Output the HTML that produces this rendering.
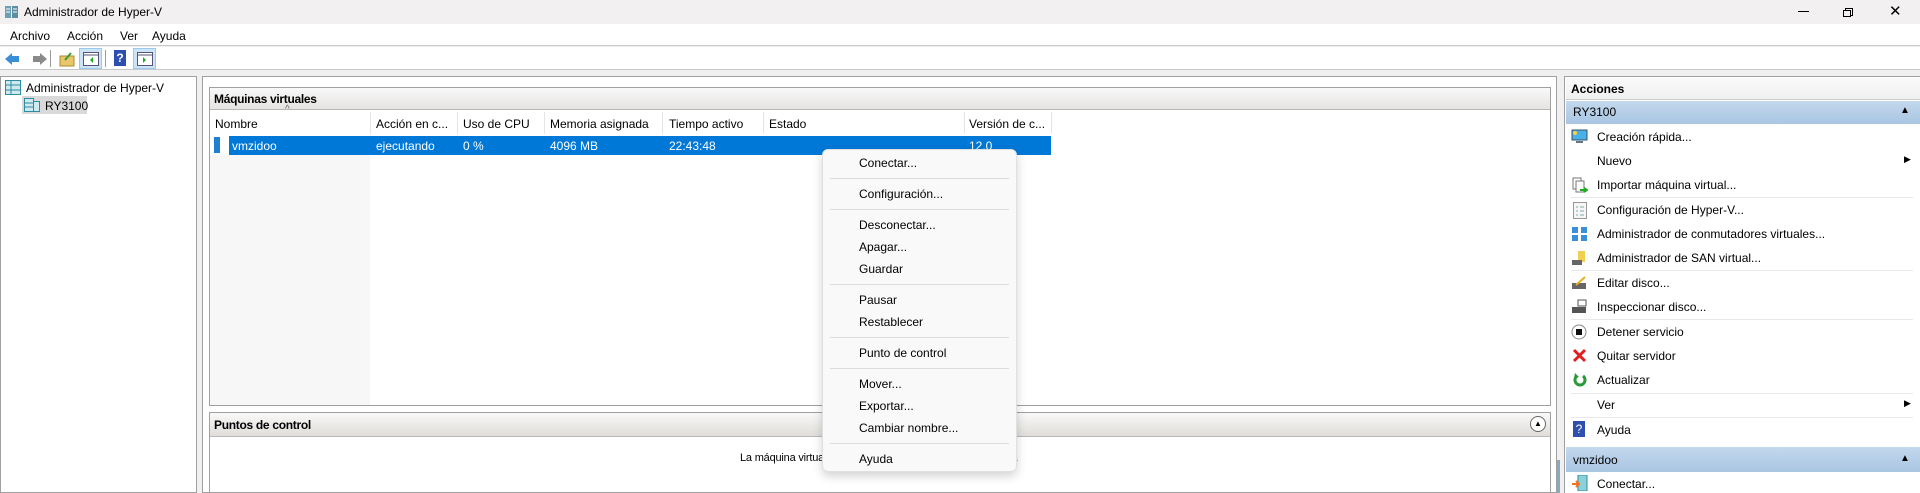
<!DOCTYPE html>
<html><head><meta charset="utf-8"><style>
*{box-sizing:border-box;margin:0;padding:0}
body{width:1920px;height:493px;overflow:hidden;background:#f0f0f0;font-family:"Liberation Sans",sans-serif;font-size:12px;color:#000;position:relative}
.a{position:absolute;white-space:nowrap}
.sep{position:absolute;height:1px;background:#dcdcdc}
.ico{position:absolute}
</style></head><body>
<!-- title bar -->
<div class="a" style="left:0;top:0;width:1920px;height:24px;background:#f2f0f1"></div>
<svg class="ico" style="left:5px;top:5px" width="14" height="14"><rect x="0" y="1" width="6" height="12" fill="#6a9fb5"/><rect x="7" y="1" width="6" height="12" fill="#5b8ea0"/><path d="M1 4h4M1 7h4M8 4h4M8 7h4" stroke="#fff"/></svg>
<div class="a" style="left:24px;top:5px;font-size:12px">Administrador de Hyper-V</div>
<div class="a" style="left:1798px;top:11px;width:11px;height:1px;background:#000"></div>
<div class="a" style="left:1845px;top:8px;width:8px;height:8px;border:1px solid #000"></div>
<div class="a" style="left:1843px;top:10px;width:8px;height:7px;border:1px solid #000;background:#f2f0f1"></div>
<div class="a" style="left:1889px;top:2px;font-size:15px">✕</div>
<!-- menu -->
<div class="a" style="left:0;top:24px;width:1920px;height:22px;background:#fff;border-bottom:1px solid #c8c8c8"></div>
<div class="a" style="left:10px;top:29px">Archivo</div>
<div class="a" style="left:67px;top:29px">Acción</div>
<div class="a" style="left:120px;top:29px">Ver</div>
<div class="a" style="left:152px;top:29px">Ayuda</div>
<!-- toolbar -->
<div class="a" style="left:0;top:47px;width:1920px;height:23px;background:#fff;border-bottom:1px solid #c8c8c8"></div>
<svg class="ico" style="left:4px;top:51px" width="44" height="16"><path d="M1 8l7-6v3h7v6H8v3z" fill="#3b8fd6"/><path d="M43 8l-7-6v3h-7v6h7v3z" fill="#8a8a8a"/></svg>
<div class="a" style="left:50px;top:50px;width:1px;height:17px;background:#999"></div>
<svg class="ico" style="left:59px;top:51px" width="16" height="16"><rect x="1" y="5" width="14" height="10" fill="#e8c66a" stroke="#b08a30"/><path d="M6 9l6-7" stroke="#3a9a3a" stroke-width="2"/></svg>
<div class="a" style="left:79px;top:48px;width:23px;height:21px;background:#cde4f7;border:1px solid #99c9ef"></div>
<svg class="ico" style="left:83px;top:52px" width="16" height="14"><rect x=".5" y=".5" width="15" height="13" fill="#fff" stroke="#557"/><path d="M1 3h14" stroke="#557"/><path d="M10 5l-3 3 3 3z" fill="#2a2"/></svg>
<div class="a" style="left:105px;top:50px;width:1px;height:17px;background:#999"></div>
<div class="a" style="left:114px;top:50px;width:12px;height:16px;background:#2c4fb0;color:#fff;font-weight:bold;text-align:center;line-height:16px">?</div>
<div class="a" style="left:133px;top:48px;width:23px;height:21px;background:#cde4f7;border:1px solid #99c9ef"></div>
<svg class="ico" style="left:137px;top:52px" width="16" height="14"><rect x=".5" y=".5" width="15" height="13" fill="#fff" stroke="#557"/><path d="M1 3h14" stroke="#557"/><path d="M6 5l3 3-3 3z" fill="#2a2"/></svg>
<!-- left pane -->
<div class="a" style="left:0;top:76px;width:197px;height:417px;background:#fff;border:1px solid #a0a0a0"></div>
<svg class="ico" style="left:5px;top:80px" width="16" height="15"><rect x=".5" y=".5" width="15" height="14" fill="#cfe9ee" stroke="#2b8ea0"/><path d="M1 5h14M1 10h14M6 1v13" stroke="#2b8ea0"/></svg>
<div class="a" style="left:26px;top:81px">Administrador de Hyper-V</div>
<div class="a" style="left:22px;top:96px;width:65px;height:18px;background:#d9d9d9"></div>
<svg class="ico" style="left:24px;top:98px" width="16" height="14"><rect x=".5" y=".5" width="9" height="13" fill="#cfe9ee" stroke="#2b8ea0"/><rect x="9.5" y="3.5" width="6" height="10" fill="#cfe9ee" stroke="#2b8ea0"/><path d="M1 5h8M1 9h8" stroke="#2b8ea0"/></svg>
<div class="a" style="left:45px;top:99px">RY3100</div>
<!-- middle frame -->
<div class="a" style="left:202px;top:76px;width:1355px;height:417px;background:#fff;border:1px solid #a0a0a0"></div>
<div class="a" style="left:209px;top:87px;width:1342px;height:319px;background:#fff;border:1px solid #a0a0a0"></div>
<div class="a" style="left:210px;top:88px;width:1340px;height:22px;background:linear-gradient(#f9f9f9,#e6e4e2);border-bottom:1px solid #b8b8b8"></div>
<div class="a" style="left:214px;top:92px;font-weight:bold;font-size:12px;letter-spacing:-0.3px">Máquinas virtuales</div>
<div class="a" style="left:210px;top:155px;width:160px;height:250px;background:#f7f7f7"></div>
<div class="a" style="left:285px;top:104px;font-size:10px;color:#666">^</div>
<div class="a" style="left:215px;top:117px">Nombre</div>
<div class="a" style="left:376px;top:117px">Acción en c...</div>
<div class="a" style="left:463px;top:117px">Uso de CPU</div>
<div class="a" style="left:550px;top:117px">Memoria asignada</div>
<div class="a" style="left:669px;top:117px">Tiempo activo</div>
<div class="a" style="left:769px;top:117px">Estado</div>
<div class="a" style="left:969px;top:117px">Versión de c...</div>
<div class="a" style="left:370px;top:112px;width:1px;height:22px;background:#e5e5e5"></div>
<div class="a" style="left:457px;top:112px;width:1px;height:22px;background:#e5e5e5"></div>
<div class="a" style="left:544px;top:112px;width:1px;height:22px;background:#e5e5e5"></div>
<div class="a" style="left:662px;top:112px;width:1px;height:22px;background:#e5e5e5"></div>
<div class="a" style="left:763px;top:112px;width:1px;height:22px;background:#e5e5e5"></div>
<div class="a" style="left:964px;top:112px;width:1px;height:22px;background:#e5e5e5"></div>
<div class="a" style="left:1051px;top:112px;width:1px;height:22px;background:#e5e5e5"></div>
<div class="a" style="left:214px;top:137px;width:6px;height:16px;background:#1f7fd0"></div>
<div class="a" style="left:229px;top:136px;width:822px;height:19px;background:#0078d7"></div>
<div class="a" style="left:232px;top:139px;color:#fff">vmzidoo</div>
<div class="a" style="left:376px;top:139px;color:#fff">ejecutando</div>
<div class="a" style="left:463px;top:139px;color:#fff">0 %</div>
<div class="a" style="left:550px;top:139px;color:#fff">4096 MB</div>
<div class="a" style="left:669px;top:139px;color:#fff">22:43:48</div>
<div class="a" style="left:969px;top:139px;color:#fff">12.0</div>
<!-- puntos de control -->
<div class="a" style="left:209px;top:412px;width:1342px;height:81px;background:#fff;border:1px solid #a0a0a0"></div>
<div class="a" style="left:210px;top:413px;width:1340px;height:24px;background:linear-gradient(#f9f9f9,#e0ddd9);border-bottom:1px solid #b8b8b8"></div>
<div class="a" style="left:214px;top:418px;font-weight:bold;letter-spacing:-0.3px">Puntos de control</div>
<div class="a" style="left:1530px;top:416px;width:16px;height:16px;border:1px solid #666;border-radius:50%;font-size:8px;text-align:center;line-height:14px;background:#fff">▲</div>
<div class="a" style="left:740px;top:452px;font-size:11px;letter-spacing:-0.2px">La máquina virtual seleccionada no tiene puntos de control.</div>
<div class="a" style="left:1557px;top:460px;width:3px;height:33px;background:#8ab"></div>
<!-- actions -->
<div class="a" style="left:1564px;top:76px;width:356px;height:417px;background:#fff;border-left:1px solid #a0a0a0;border-top:1px solid #a0a0a0"></div>
<div class="a" style="left:1566px;top:78px;width:354px;height:22px;background:linear-gradient(#fafafa,#f0f0f0);border-bottom:1px solid #ccc"></div>
<div class="a" style="left:1571px;top:82px;font-weight:bold">Acciones</div>
<div class="a" style="left:1566px;top:101px;width:354px;height:23px;background:linear-gradient(#c3d8ec,#a9c6e3)"></div>
<div class="a" style="left:1573px;top:105px">RY3100</div>
<div class="a" style="left:1900px;top:105px;font-size:10px">▲</div>
<div class="a" style="left:1566px;top:447px;width:354px;height:25px;background:linear-gradient(#c3d8ec,#a9c6e3)"></div>
<div class="a" style="left:1573px;top:453px">vmzidoo</div>
<div class="a" style="left:1900px;top:453px;font-size:10px">▲</div>
<div class="a" style="left:1597px;top:130px">Creación rápida...</div>
<div class="a" style="left:1597px;top:154px">Nuevo</div>
<div class="a" style="left:1597px;top:178px">Importar máquina virtual...</div>
<div class="a" style="left:1597px;top:203px">Configuración de Hyper-V...</div>
<div class="a" style="left:1597px;top:227px">Administrador de conmutadores virtuales...</div>
<div class="a" style="left:1597px;top:251px">Administrador de SAN virtual...</div>
<div class="a" style="left:1597px;top:276px">Editar disco...</div>
<div class="a" style="left:1597px;top:300px">Inspeccionar disco...</div>
<div class="a" style="left:1597px;top:325px">Detener servicio</div>
<div class="a" style="left:1597px;top:349px">Quitar servidor</div>
<div class="a" style="left:1597px;top:373px">Actualizar</div>
<div class="a" style="left:1597px;top:398px">Ver</div>
<div class="a" style="left:1597px;top:423px">Ayuda</div>
<div class="a" style="left:1597px;top:477px">Conectar...</div>
<div class="a" style="left:1904px;top:154px;font-size:9px">▶</div>
<div class="a" style="left:1904px;top:398px;font-size:9px">▶</div>
<div class="sep" style="left:1571px;top:197px;width:342px;background:#e8e8e8"></div>
<div class="sep" style="left:1571px;top:270px;width:342px;background:#e8e8e8"></div>
<div class="sep" style="left:1571px;top:319px;width:342px;background:#e8e8e8"></div>
<div class="sep" style="left:1571px;top:393px;width:342px;background:#e8e8e8"></div>
<div class="sep" style="left:1571px;top:417px;width:342px;background:#e8e8e8"></div>
<!-- action icons -->
<svg class="ico" style="left:1571px;top:129px" width="17" height="16"><rect x="1" y="1" width="15" height="10" fill="#4ab0e8" stroke="#356"/><rect x="5" y="12" width="7" height="2" fill="#678"/><circle cx="4" cy="4" r="2" fill="#ffd23a"/></svg>
<svg class="ico" style="left:1572px;top:177px" width="16" height="17"><rect x="1" y="1" width="8" height="11" fill="#fff" stroke="#777"/><rect x="4" y="4" width="8" height="11" fill="#fff" stroke="#777"/><path d="M8 13h6M12 11l3 2-3 2" stroke="#2a2" stroke-width="2" fill="none"/></svg>
<svg class="ico" style="left:1573px;top:202px" width="14" height="17"><rect x=".5" y=".5" width="13" height="16" fill="#f6f6f6" stroke="#999"/><path d="M3 5h2M7 5h4M3 9h2M7 9h4M3 13h2M7 13h4" stroke="#8aa"/></svg>
<svg class="ico" style="left:1571px;top:226px" width="17" height="16"><rect x="1" y="1" width="6" height="6" fill="#3a8fd8"/><rect x="10" y="1" width="6" height="6" fill="#3a8fd8"/><rect x="1" y="9" width="6" height="6" fill="#3a8fd8"/><rect x="10" y="9" width="6" height="6" fill="#3a8fd8"/></svg>
<svg class="ico" style="left:1571px;top:250px" width="17" height="16"><rect x="7" y="1" width="7" height="11" fill="#f0d050"/><rect x="1" y="10" width="10" height="5" fill="#666"/></svg>
<svg class="ico" style="left:1571px;top:275px" width="16" height="15"><rect x="1" y="8" width="14" height="6" fill="#666"/><path d="M5 10l9-8" stroke="#e8b020" stroke-width="2"/></svg>
<svg class="ico" style="left:1571px;top:299px" width="16" height="15"><rect x="1" y="8" width="14" height="6" fill="#555"/><rect x="7" y="1" width="8" height="6" fill="#fff" stroke="#555"/></svg>
<svg class="ico" style="left:1571px;top:324px" width="16" height="16"><circle cx="8" cy="8" r="7" fill="#fff" stroke="#888"/><rect x="5" y="5" width="6" height="6" fill="#111"/></svg>
<svg class="ico" style="left:1572px;top:348px" width="15" height="15"><path d="M2 2l11 11M13 2L2 13" stroke="#e02020" stroke-width="3"/></svg>
<svg class="ico" style="left:1572px;top:372px" width="15" height="15"><path d="M11 4a5 5 0 1 1-6 0" stroke="#2a9a3a" stroke-width="3" fill="none"/><path d="M3 1l4 4-5 1z" fill="#2a9a3a"/></svg>
<div class="a" style="left:1573px;top:421px;width:12px;height:16px;background:#2c4fb0;color:#fff;text-align:center;line-height:16px">?</div>
<svg class="ico" style="left:1571px;top:475px" width="17" height="16"><rect x="7" y="0" width="9" height="16" fill="#8ed0d8" stroke="#2b8ea0"/><path d="M1 9h6M5 6l3 3-3 3" stroke="#f07020" stroke-width="2" fill="none"/></svg>
<!-- context menu -->
<div class="a" style="left:822px;top:149px;width:195px;height:323px;background:#f9f9f9;border:1px solid #e0e0e0;border-radius:6px;box-shadow:0 4px 10px rgba(0,0,0,.18)"></div>
<div class="a" style="left:859px;top:156px">Conectar...</div>
<div class="a" style="left:859px;top:187px">Configuración...</div>
<div class="a" style="left:859px;top:218px">Desconectar...</div>
<div class="a" style="left:859px;top:240px">Apagar...</div>
<div class="a" style="left:859px;top:262px">Guardar</div>
<div class="a" style="left:859px;top:293px">Pausar</div>
<div class="a" style="left:859px;top:315px">Restablecer</div>
<div class="a" style="left:859px;top:346px">Punto de control</div>
<div class="a" style="left:859px;top:377px">Mover...</div>
<div class="a" style="left:859px;top:399px">Exportar...</div>
<div class="a" style="left:859px;top:421px">Cambiar nombre...</div>
<div class="a" style="left:859px;top:452px">Ayuda</div>
<div class="sep" style="left:830px;top:178px;width:179px"></div>
<div class="sep" style="left:830px;top:209px;width:179px"></div>
<div class="sep" style="left:830px;top:284px;width:179px"></div>
<div class="sep" style="left:830px;top:337px;width:179px"></div>
<div class="sep" style="left:830px;top:368px;width:179px"></div>
<div class="sep" style="left:830px;top:443px;width:179px"></div>
</body></html>
